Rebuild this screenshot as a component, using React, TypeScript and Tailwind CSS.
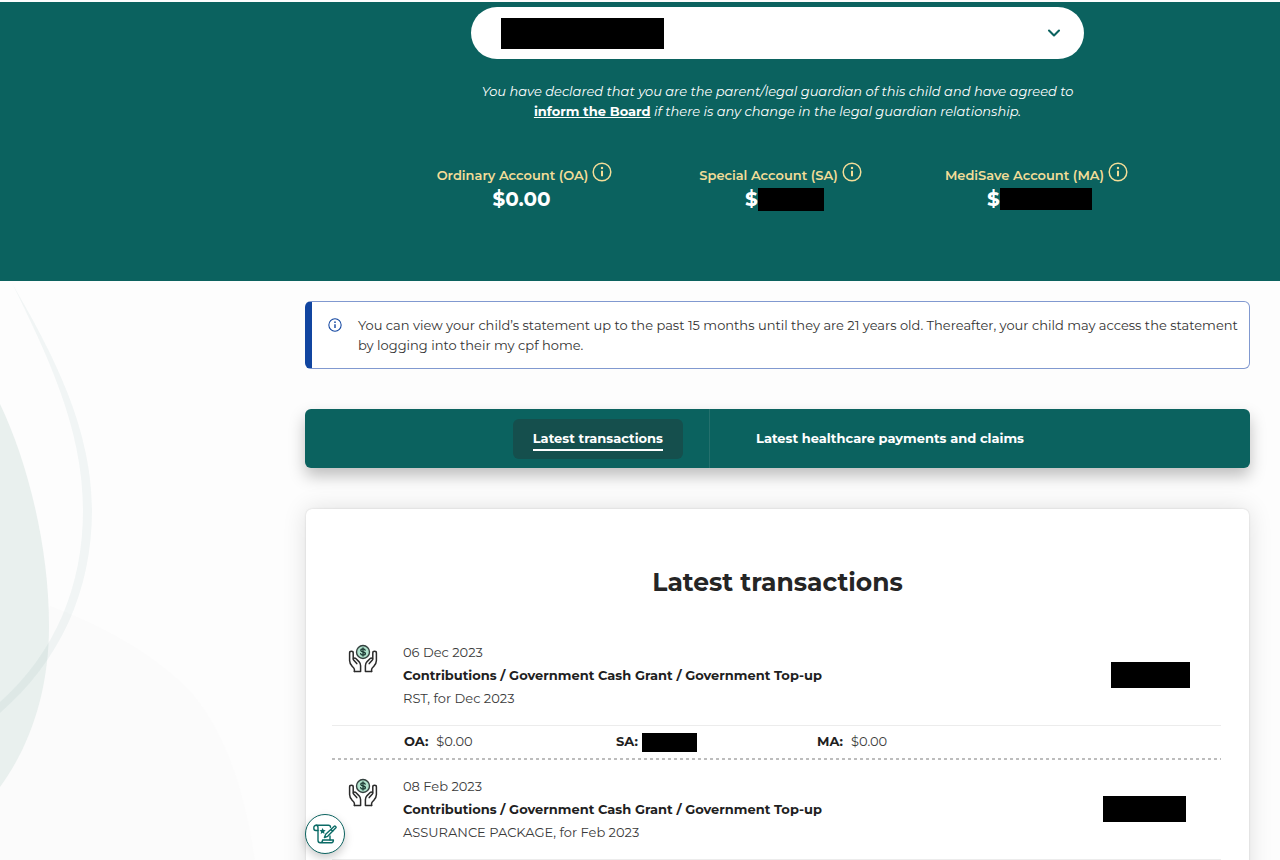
import React, { useState } from 'react';
import { ChevronDown } from 'lucide-react';

interface Transaction {
  id: string;
  date: string;
  title: string;
  detail: string;
  // size of the masked amount
  maskClass: string;
  split?: { oa: string; ma: string };
}

const transactions: Transaction[] = [
  {
    id: '1',
    date: '06 Dec 2023',
    title: 'Contributions / Government Cash Grant / Government Top-up',
    detail: 'RST, for Dec 2023',
    maskClass: 'mr-[31px] w-[79px]',
    split: { oa: '$0.00', ma: '$0.00' },
  },
  {
    id: '2',
    date: '08 Feb 2023',
    title: 'Contributions / Government Cash Grant / Government Top-up',
    detail: 'ASSURANCE PACKAGE, for Feb 2023',
    maskClass: 'mr-[35px] w-[83px]',
  },
];

const InfoIcon = ({ className }: { className?: string }) => (
  <svg viewBox="0 0 20 20" fill="none" stroke="currentColor" className={className} aria-hidden="true">
    <circle cx="10" cy="10" r="8.8" strokeWidth="1.5" />
    <circle cx="10" cy="6" r="1.2" fill="currentColor" stroke="none" />
    <path d="M10 8.8v5.4" strokeWidth="2" />
  </svg>
);

const HandsIcon = () => (
  <svg viewBox="0 0 30 30" fill="none" strokeLinejoin="round" strokeLinecap="round" className="h-[30px] w-[30px]" aria-hidden="true">
    <circle cx="15" cy="8" r="6.5" fill="#b0e2cd" stroke="#34413f" strokeWidth="1.4" />
    <path d="M17.2 6.2c-.3-.9-1.1-1.300-2.200-1.300-1.300 0-2.200.6-2.200 1.500 0 2.200 4.600 1 4.600 3.200 0 1-1 1.600-2.400 1.600-1.300 0-2.200-.6-2.400-1.500M15 3.900v8.200" stroke="#1d3a34" strokeWidth="1.3" />
    <g stroke="#2b2b2b" strokeWidth="1.5">
      <path d="M6.400 27.500v-2c0-1.400-1.300-2.300-2.400-3.400-1.600-1.800-2.400-3.400-2.400-5.500V9c0-2.200 3.600-2.200 3.600 0v6" />
      <path d="M8.800 19.600 5.600 16c-.9-1.400.9-2.700 2.200-1.500l3.100 3.100c1.300 1.400 1.700 2.500 1.700 4.200v5.700H6.400" />
      <path d="M23.600 27.500v-2c0-1.400 1.300-2.300 2.400-3.400 1.600-1.800 2.400-3.400 2.400-5.500V9c0-2.200-3.600-2.200-3.600 0v6" />
      <path d="M21.200 19.600l3.200-3.600c.9-1.400-.9-2.700-2.200-1.500l-3.100 3.100c-1.300 1.400-1.700 2.500-1.700 4.200v5.700h6.200" />
    </g>
  </svg>
);

const ScrollPenIcon = () => (
  <svg viewBox="0 0 24 24" fill="none" stroke="#0b6b66" strokeWidth="1.4" strokeLinejoin="round" strokeLinecap="round" className="h-6 w-6" aria-hidden="true">
    <path d="M5 8.500H2.800C1.200 8.500.8 7.500.8 6c0-1.600.9-2.700 2.400-2.700h12.300c1.300 0 2 .9 2 2" />
    <path d="M3.200 3.300C4.500 3.300 5 4.400 5 5.800v12.400c0 1.600.9 2.500 2.300 2.500h11.200c1.200 0 1.900-1 1.900-2.700H9.600c0 1.700-.8 2.700-2.300 2.700" />
    <path d="M17 14v4" />
    <path d="M21.300 4.200c.7-.6 2.300.7 1.600 1.500l-8.200 8.600-3.300 1.300 1.300-3.300 8.600-8.100ZM18 7.500l1.800 1.700" />
    <path d="m9.600 6 1 2 2.100.2-1.600 1.500.4 2.200-1.900-1.100-1.900 1.100.4-2.200-1.600-1.500 2.100-.2 1-2Z" fill="#0b6b66" stroke="none" />
  </svg>
);

const BackgroundShapes = () => (
  <svg viewBox="0 0 300 580" fill="none" className="absolute left-0 top-0 -z-10 h-[580px] w-[300px]" aria-hidden="true">
    <path d="M50 325c40 15 95 40 140 85 35 40 55 100 65 170H0V506Z" fill="#fbfbfb" />
    <path d="M0 123C25 175 49 260 49 345c0 65-19 120-49 161Z" fill="#e9f0ee" />
    <path d="M12 2C45 60 92 140 92 229 92 310 60 380 0 432v-11c55-49 83-116 83-192C83 145 45 70 12 2Z" fill="#0b625f" fillOpacity="0.05" />
  </svg>
);

const AccountLabel = ({ name }: { name: string }) => (
  <div className="flex items-start justify-center gap-1 pl-[6px] text-[#f3dd98]">
    <span className="pt-[5px] text-[13px] font-semibold leading-4">{name}</span>
    <button type="button" aria-label={`About ${name}`}>
      <InfoIcon className="h-5 w-5" />
    </button>
  </div>
);

const TransactionRow = ({ item }: { item: Transaction }) => (
  <li>
    <div className="flex items-start border-b border-[#ececec] py-[15px]">
      <div className="w-[71px] pl-4 pt-[3px]">
        <HandsIcon />
      </div>
      <div className="flex-1 text-[13px] leading-[23px] text-[#3a3a3a]">
        <p>{item.date}</p>
        <h3 className="font-bold text-[#1f1f1f]">{item.title}</h3>
        <p>{item.detail}</p>
      </div>
      <div className={`mt-[21px] h-[26px] bg-black ${item.maskClass}`} />
    </div>
    {item.split && (
      <>
        <dl className="flex h-8 items-center pl-[72px] text-[13px] text-[#3a3a3a]">
          <div className="flex w-[212px] gap-2">
            <dt className="font-bold text-[#1f1f1f]">OA:</dt>
            <dd>{item.split.oa}</dd>
          </div>
          <div className="flex w-[201px] items-center gap-1">
            <dt className="font-bold text-[#1f1f1f]">SA:</dt>
            <dd className="h-[19px] w-[55px] bg-black" />
          </div>
          <div className="flex gap-2">
            <dt className="font-bold text-[#1f1f1f]">MA:</dt>
            <dd>{item.split.ma}</dd>
          </div>
        </dl>
        <div className="h-[2px] bg-[repeating-linear-gradient(90deg,#bdbdbd_0_3px,transparent_3px_6px)]" />
      </>
    )}
  </li>
);

const App = () => {
  const [tab, setTab] = useState<'transactions' | 'healthcare'>('transactions');

  const tabClass = (active: boolean) =>
    active ? 'rounded-md bg-[#154f4d] px-5 py-2 text-white' : 'rounded-md px-5 py-2 text-white';
  const tabTextClass = (active: boolean) =>
    active ? 'block border-b-2 border-white' : 'block border-b-2 border-transparent';

  return (
    <div className="h-screen overflow-hidden bg-[#fdfdfd] pt-[2px] font-[Montserrat,Inter,'Liberation_Sans',sans-serif]">
      {/* Header */}
      <header className="h-[279px] bg-[#0b625f] pl-[305px] pr-[30px] pt-[5px] text-white">
        <div className="relative mx-auto max-w-[613px]">
          <select
            aria-label="Child"
            className="block h-[52px] w-full appearance-none rounded-full bg-white px-8 text-black outline-none"
          >
            <option></option>
          </select>
          <div className="pointer-events-none absolute left-[30px] top-[11px] h-[31px] w-[163px] bg-black" />
          <ChevronDown className="pointer-events-none absolute right-5 top-4 h-5 w-5 text-[#0b625f]" strokeWidth={2.5} />
        </div>

        <p className="mx-auto mt-[22px] max-w-[613px] text-center text-[13px] italic leading-5">
          You have declared that you are the parent/legal guardian of this child and have agreed to{' '}
          <a href="#inform" className="font-bold not-italic underline">inform the Board</a> if there is any change in
          the legal guardian relationship.
        </p>

        <div className="mx-auto mt-[41px] grid max-w-[768px] grid-cols-3">
          <div>
            <AccountLabel name="Ordinary Account (OA)" />
            <p className="text-center text-xl font-bold leading-8">$0.00</p>
          </div>
          <div>
            <AccountLabel name="Special Account (SA)" />
            <p className="flex items-center justify-center pl-[14px] text-xl font-bold leading-8">
              $<span className="h-[23px] w-[66px] bg-black" />
            </p>
          </div>
          <div>
            <AccountLabel name="MediSave Account (MA)" />
            <p className="flex items-center justify-center pl-3 text-xl font-bold leading-8">
              $<span className="h-[22px] w-[92px] bg-black" />
            </p>
          </div>
        </div>
      </header>

      <main className="relative isolate pl-[305px] pr-[30px] pt-5">
        <BackgroundShapes />

        {/* Notice */}
        <div className="flex rounded-md border border-l-[7px] border-[#8199d0] border-l-[#1145a0] bg-white py-[13px] pl-4">
          <InfoIcon className="mt-[3px] h-[14px] w-[14px] shrink-0 text-[#1145a0]" />
          <p className="ml-4 text-[13px] leading-5 text-[#333]">
            You can view your child’s statement up to the past 15 months until they are 21 years old. Thereafter, your
            child may access the statement by logging into their my cpf home.
          </p>
        </div>

        {/* Tabs */}
        <div
          role="tablist"
          className="mt-10 grid h-[59px] grid-cols-[3fr_4fr] items-stretch rounded-md bg-[#0b625f] text-[13px] font-bold leading-[22px] shadow-[0_8px_16px_rgba(0,0,0,0.25)]"
        >
          <div className="flex items-center justify-end border-r border-[#24706d] pr-[26px]">
            <button
              type="button"
              role="tab"
              aria-selected={tab === 'transactions'}
              onClick={() => setTab('transactions')}
              className={tabClass(tab === 'transactions')}
            >
              <span className={tabTextClass(tab === 'transactions')}>Latest transactions</span>
            </button>
          </div>
          <div className="flex items-center pl-[26px]">
            <button
              type="button"
              role="tab"
              aria-selected={tab === 'healthcare'}
              onClick={() => setTab('healthcare')}
              className={tabClass(tab === 'healthcare')}
            >
              <span className={tabTextClass(tab === 'healthcare')}>Latest healthcare payments and claims</span>
            </button>
          </div>
        </div>

        {/* Transactions */}
        <section className="mx-px mt-[41px] rounded-md bg-white pb-10 pt-[57px] shadow-[0_0_24px_rgba(0,0,0,0.12),0_0_2px_rgba(0,0,0,0.15)]">
          <h2 className="text-center text-[25px] font-bold leading-8 text-[#252525]">Latest transactions</h2>
          <ul className="ml-[26px] mr-7 mt-7">
            {transactions.map((item) => (
              <TransactionRow key={item.id} item={item} />
            ))}
          </ul>
        </section>
      </main>

      <button
        type="button"
        aria-label="Feedback"
        className="fixed bottom-[6px] left-[305px] flex h-10 w-10 items-center justify-center rounded-full border border-[#0b625f] bg-white shadow-[0_4px_10px_rgba(0,0,0,0.2)]"
      >
        <ScrollPenIcon />
      </button>
    </div>
  );
};

export default App;
